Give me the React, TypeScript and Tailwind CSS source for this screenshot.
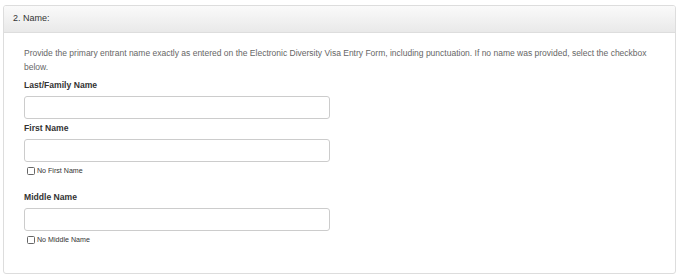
import React from "react";

const font = { fontFamily: '"Liberation Sans", Arial, sans-serif' };

function Field({ label, checkbox }: { label: string; checkbox?: string }) {
  return (
    <div className="flex flex-col">
      <label className="text-[8.6px] font-bold leading-[12px] text-[#333]">{label}</label>
      <input
        type="text"
        className="mt-[5px] h-[23px] w-[306px] rounded-[3px] border border-[#ccc] bg-white outline-none"
      />
      {checkbox && (
        <label className="mt-[4px] flex items-center gap-[2px] pl-[3px] text-[7.1px] leading-[10px] text-[#333]">
          <input
            type="checkbox"
            className="h-[8px] w-[8px] appearance-none rounded-[1.5px] border border-[#666] bg-white"
          />
          {checkbox}
        </label>
      )}
    </div>
  );
}

export default function App() {
  return (
    <div className="h-[277px] w-[680px] bg-white pl-[3px] pr-[4px] pt-[5px]" style={font}>
      <div className="h-[269px] overflow-hidden rounded-[3px] border border-[#ddd] bg-white">
        <div className="flex h-[27px] items-center border-b border-[#ddd] bg-gradient-to-b from-[#fafafa] to-[#e9e9e9] pl-[9px] text-[9px] text-[#333]">
          2. Name:
        </div>
        <div className="pl-[20px] pr-[20px] pt-[13px]">
          <p className="text-[8.5px] leading-[14px] text-[#666]">
            Provide the primary entrant name exactly as entered on the Electronic Diversity Visa Entry Form,
            including punctuation. If no name was provided, select the checkbox below.
          </p>
          <div className="mt-[5px] flex flex-col gap-[3px]">
            <Field label="Last/Family Name" />
            <Field label="First Name" checkbox="No First Name" />
            <div className="mt-[12px]">
              <Field label="Middle Name" checkbox="No Middle Name" />
            </div>
          </div>
        </div>
      </div>
    </div>
  );
}
